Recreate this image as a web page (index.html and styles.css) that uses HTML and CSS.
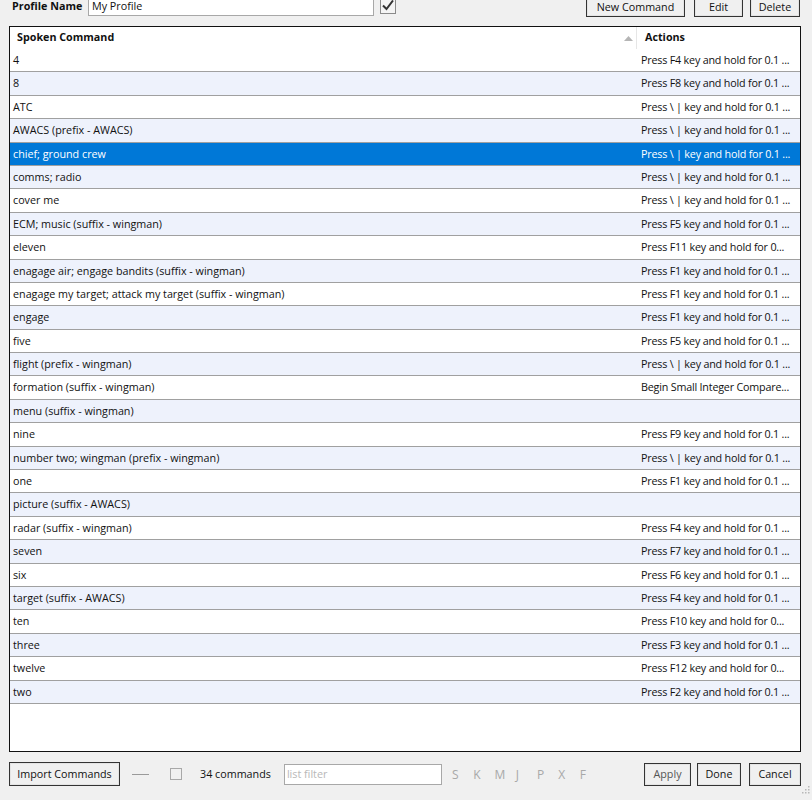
FILE: index.html
```html
<!DOCTYPE html>
<html>
<head>
<meta charset="utf-8">
<link rel="stylesheet" href="styles.css">
</head>
<body>
<div class="window">
  <div class="topbar">
    <label class="plabel">Profile Name</label>
    <div class="pinput">My Profile</div>
    <div class="bigcheck">
      <svg width="16" height="16" viewBox="0 0 16 16"><rect x="0.5" y="0.5" width="15" height="15" fill="#f4f4f4" stroke="#8a8a8a"/><path d="M3 7.5 L6.5 11 L13 2.5" fill="none" stroke="#333" stroke-width="2"/></svg>
    </div>
    <div class="spacer"></div>
    <button class="btn btn-new">New Command</button>
    <button class="btn btn-edit">Edit</button>
    <button class="btn btn-del">Delete</button>
  </div>

  <div class="list">
    <div class="header">
      <div class="hcell c1">Spoken Command<span class="sort"><svg width="9" height="6" viewBox="0 0 9 6"><path d="M0 6 L4.5 1 L9 6 Z" fill="#b5b5b5"/></svg></span></div>
      <div class="hcell c2">Actions</div>
    </div>
    <div class="rows" id="rows"></div>
  </div>

  <div class="bottombar">
    <button class="btn btn-import">Import Commands</button>
    <span class="dash"></span>
    <span class="smallcheck"></span>
    <span class="count">34 commands</span>
    <div class="filter">list filter</div>
    <div class="letters"><span>S</span><span>K</span><span>M</span><span>J</span><span>P</span><span>X</span><span>F</span></div>
    <div class="spacer"></div>
    <button class="btn btn-apply">Apply</button>
    <button class="btn btn-done">Done</button>
    <button class="btn btn-cancel">Cancel</button>
    <svg class="grip" width="8" height="8" viewBox="0 0 8 8"><g fill="#b8b8b8"><rect x="6" y="0" width="1.5" height="1.5"/><rect x="3" y="3" width="1.5" height="1.5"/><rect x="6" y="3" width="1.5" height="1.5"/><rect x="0" y="6" width="1.5" height="1.5"/><rect x="3" y="6" width="1.5" height="1.5"/><rect x="6" y="6" width="1.5" height="1.5"/></g></svg>
  </div>
</div>
<script src="app.js"></script>
</body>
</html>
```
FILE: app.js
```js
var data = [
  ["4","Press F4 key and hold for 0.1 ..."],
  ["8","Press F8 key and hold for 0.1 ..."],
  ["ATC","Press \\ | key and hold for 0.1 ..."],
  ["AWACS (prefix - AWACS)","Press \\ | key and hold for 0.1 ..."],
  ["chief; ground crew","Press \\ | key and hold for 0.1 ..."],
  ["comms; radio","Press \\ | key and hold for 0.1 ..."],
  ["cover me","Press \\ | key and hold for 0.1 ..."],
  ["ECM; music (suffix - wingman)","Press F5 key and hold for 0.1 ..."],
  ["eleven","Press F11 key and hold for 0..."],
  ["enagage air; engage bandits (suffix - wingman)","Press F1 key and hold for 0.1 ..."],
  ["enagage my target; attack my target (suffix - wingman)","Press F1 key and hold for 0.1 ..."],
  ["engage","Press F1 key and hold for 0.1 ..."],
  ["five","Press F5 key and hold for 0.1 ..."],
  ["flight (prefix - wingman)","Press \\ | key and hold for 0.1 ..."],
  ["formation (suffix - wingman)","Begin Small Integer Compare..."],
  ["menu (suffix - wingman)",""],
  ["nine","Press F9 key and hold for 0.1 ..."],
  ["number two; wingman (prefix - wingman)","Press \\ | key and hold for 0.1 ..."],
  ["one","Press F1 key and hold for 0.1 ..."],
  ["picture (suffix - AWACS)",""],
  ["radar (suffix - wingman)","Press F4 key and hold for 0.1 ..."],
  ["seven","Press F7 key and hold for 0.1 ..."],
  ["six","Press F6 key and hold for 0.1 ..."],
  ["target (suffix - AWACS)","Press F4 key and hold for 0.1 ..."],
  ["ten","Press F10 key and hold for 0..."],
  ["three","Press F3 key and hold for 0.1 ..."],
  ["twelve","Press F12 key and hold for 0..."],
  ["two","Press F2 key and hold for 0.1 ..."]
];
var rows = document.getElementById("rows");
data.forEach(function (d, i) {
  var r = document.createElement("div");
  r.className = "row" + (i % 2 ? " alt" : "") + (i === 4 ? " sel" : "");
  var a = document.createElement("div"); a.className = "cell c1"; a.textContent = d[0];
  var b = document.createElement("div"); b.className = "cell c2"; b.textContent = d[1];
  r.appendChild(a); r.appendChild(b);
  rows.appendChild(r);
});
```
FILE: styles.css
```css
html, body {
  margin: 0;
  padding: 0;
  background: #f0f0f0;
  overflow: hidden;
}
body {
  font-family: "Open Sans", "Noto Sans", sans-serif;
  font-size: 10.75px;
  color: #111;
  width: 812px;
  height: 800px;
}
.window {
  display: flex;
  flex-direction: column;
  height: 800px;
}
.topbar {
  display: flex;
  align-items: flex-start;
  margin-top: -7px;
  height: 33px;
  padding-left: 12px;
  padding-right: 12px;
}
.plabel {
  font-weight: bold;
  margin-top: 5px;
  width: 76px;
  line-height: 16px;
}
.pinput {
  width: 281px;
  border: 1px solid #a8a8a8;
  background: #fff;
  padding: 4px 0 0 3px;
  box-sizing: content-box;
  line-height: 16px;
  height: 17px;
}
.bigcheck {
  margin-left: 6px;
  margin-top: 5px;
  width: 16px;
  height: 16px;
}
.bigcheck svg { display: block; }
.spacer { flex: 1; }
.btn {
  font-family: inherit;
  font-size: 10.75px;
  color: #111;
  background: #f0f0f0;
  border: 1px solid #333;
  box-shadow: inset 0 0 0 1px #e4e4e4;
  padding: 0;
  height: 23px;
  line-height: 21px;
  border-radius: 0;
  box-sizing: border-box;
}
.topbar .btn {
  height: 24px;
  padding-top: 4px;
  line-height: 18px;
}
.btn-new { width: 99px; }
.btn-edit { width: 49px; margin-left: 9px; }
.btn-del { width: 50px; margin-left: 7px; }

.list {
  margin-left: 9px;
  width: 792px;
  height: 726px;
  border: 1px solid #111;
  box-sizing: border-box;
  background: #fff;
  overflow: hidden;
}
.header {
  display: flex;
  height: 22px;
  font-weight: bold;
}
.hcell {
  line-height: 21px;
  position: relative;
}
.header .c1 {
  width: 627px;
  padding-left: 7px;
  box-sizing: border-box;
  border-right: 1px solid #e6e6e6;
}
.header .c2 {
  padding-left: 8px;
}
.sort {
  position: absolute;
  right: 3px;
  top: 8px;
  line-height: 0;
}
.row {
  display: flex;
  height: 23.4px;
  box-sizing: border-box;
  border-bottom: 1px solid #a0a0a0;
  background: #fff;
  line-height: 23px;
}
.row.alt { background: #eef2fc; }
.row.sel { background: #0078d7; color: #fff; }
.cell {
  white-space: nowrap;
  overflow: hidden;
}
.row .c1 {
  width: 627px;
  padding-left: 3px;
  box-sizing: border-box;
}
.row .c2 {
  width: 163px;
  padding-left: 4px;
  box-sizing: border-box;
  letter-spacing: -0.2px;
}

.bottombar {
  display: flex;
  align-items: center;
  height: 44px;
  padding-left: 9px;
  padding-right: 11px;
  position: relative;
}
.btn-import { width: 111px; height: 24px; }
.dash {
  width: 17px;
  height: 1px;
  background: #9a9a9a;
  margin-left: 12px;
}
.smallcheck {
  width: 12px;
  height: 12px;
  border: 1px solid #a8a8a8;
  background: #f0f0f0;
  margin-left: 21px;
  box-sizing: border-box;
}
.count {
  margin-left: 18px;
}
.filter {
  margin-left: 13px;
  width: 158px;
  height: 21px;
  box-sizing: border-box;
  border: 1px solid #a8a8a8;
  background: #fff;
  color: #b8b8b8;
  line-height: 19px;
  padding-left: 2px;
}
.letters {
  display: flex;
  margin-left: 10px;
  color: #a8a8a8;
  font-size: 12px;
}
.letters span { width: 21.3px; }
.btn-apply { width: 47px; color: #555; }
.btn-done { width: 44px; margin-left: 6px; }
.btn-cancel { width: 52px; margin-left: 8px; }
.grip {
  position: absolute;
  right: 2px;
  bottom: 2px;
}
```
